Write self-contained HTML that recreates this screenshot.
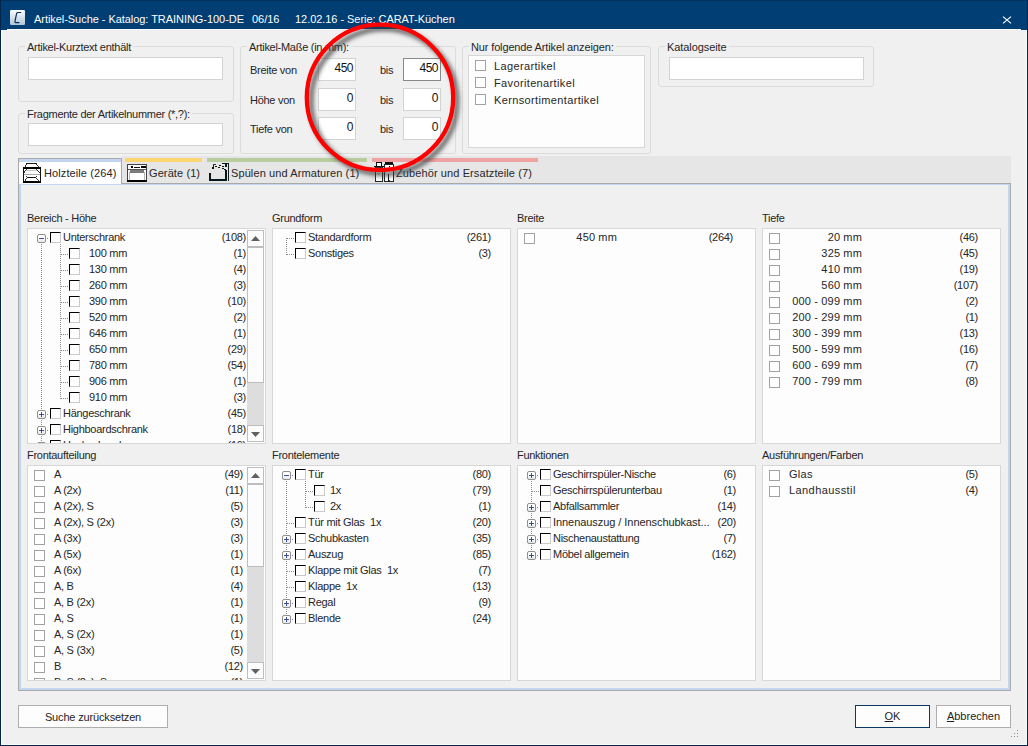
<!DOCTYPE html><html><head><meta charset="utf-8"><style>
*{box-sizing:border-box;margin:0;padding:0}
html,body{width:1028px;height:746px;overflow:hidden;background:#003E74}
body{position:relative;font-family:"Liberation Sans",sans-serif;font-size:11px;color:#1e1e1e}
.a{position:absolute;white-space:pre;line-height:13px}
.m{letter-spacing:-0.28px}
.t{letter-spacing:0.15px}
.tt{position:absolute;white-space:pre;color:#fff;font-size:11px;top:13px;line-height:12px;letter-spacing:-0.05px}
.gb{position:absolute;border:1px solid #DCDCDC;border-radius:3px}
.inp{position:absolute;background:#fff;border:1px solid #D3D3D3}
.lb{position:absolute;background:#FDFDFD;border:1px solid #D7D7D7;overflow:hidden}
.r{text-align:right}
.cb{position:absolute;width:11px;height:11px;background:#fff;border:1px solid #A2A2A2}
.cb3{position:absolute;width:11px;height:11px;background:#fff;border-top:1px solid #000;border-left:1px solid #000;border-right:1px solid #C9C9C9;border-bottom:1px solid #C9C9C9}
.ex{position:absolute;width:9px;height:9px;border:1px solid #8E8E8E;border-radius:2px;background:linear-gradient(#fff 0%,#fff 45%,#E6E6E6 100%)}
.ex:before{content:"";position:absolute;left:1px;top:3px;width:5px;height:1px;background:#3B4FA1}
.ex.p:after{content:"";position:absolute;left:3px;top:1px;width:1px;height:5px;background:#3B4FA1}
.btn{position:absolute;top:705px;height:23px;background:#FDFDFD;border:1px solid #ADADAD;text-align:center;line-height:21px;color:#1e1e1e}
.sb{position:absolute;width:17px;background:#DDDDDD}
.sbb{position:absolute;left:0;width:17px;height:17px;background:#FCFCFC;border:1px solid #BEBEBE}
.th{position:absolute;left:0;width:17px;background:#FCFCFC;border:1px solid #BEBEBE}
</style></head><body>
<div class="a" style="left:0;top:0;width:1028px;height:1px;background:#00305C"></div>
<svg class="a" style="left:10px;top:10px" width="15" height="15" viewBox="0 0 15 15"><defs><linearGradient id="ig" x1="0" y1="0" x2="0" y2="1"><stop offset="0" stop-color="#FBFDFE"/><stop offset="1" stop-color="#AFC6D9"/></linearGradient></defs><rect x="0" y="0" width="15" height="15" rx="1.2" fill="url(#ig)"/><path d="M11.2 2.5 H7.8 Q7 2.5 6.6 3.6 L5 11 Q4.7 12.7 6.3 12.7 H9.4" fill="none" stroke="#0A2A5A" stroke-width="1.2"/></svg>
<div class="tt" style="left:34px">Artikel-Suche - Katalog: TRAINING-100-DE</div>
<div class="tt" style="left:252px">06/16</div>
<div class="tt" style="left:295px">12.02.16 - Serie: CARAT-Küchen</div>
<svg class="a" style="left:1002px;top:15px" width="10" height="10" viewBox="0 0 10 10"><path d="M1 1.6L9 8.4M9 1.6L1 8.4" stroke="#fff" stroke-width="1.2"/></svg>
<div class="a" style="left:0;top:0;width:1px;height:746px;background:#03254C"></div>
<div class="a" style="left:1027px;top:0;width:1px;height:746px;background:#03254C"></div>
<div class="a" style="left:0;top:745px;width:1028px;height:1px;background:#03254C"></div>
<div class="a" style="left:1px;top:29px;width:1026px;height:716px;background:#F0F0F0;border:1px solid #FDFDFD"></div>
<div class="a" style="left:1px;top:29px;width:6px;height:1px;background:#003E74"></div>
<div class="a" style="left:1021px;top:29px;width:6px;height:1px;background:#003E74"></div>
<div class="gb" style="left:18px;top:46px;width:216px;height:56px"></div>
<div class="a m" style="left:25px;top:41px;background:#F0F0F0;padding:0 2px;color:#262626">Artikel-Kurztext enthält</div>
<div class="inp" style="left:28px;top:57px;width:195px;height:23px;"></div>
<div class="gb" style="left:18px;top:113px;width:216px;height:41px"></div>
<div class="a m" style="left:25px;top:108px;background:#F0F0F0;padding:0 2px;color:#262626">Fragmente der Artikelnummer (*,?):</div>
<div class="inp" style="left:28px;top:123px;width:195px;height:23px;"></div>
<div class="gb" style="left:240px;top:46px;width:216px;height:108px"></div>
<div class="a m" style="left:247px;top:41px;background:#F0F0F0;padding:0 2px;color:#262626">Artikel-Maße (in mm):</div>
<div class="a m" style="left:250px;top:64px;color:#262626">Breite von</div>
<div class="a m" style="left:380px;top:64px;color:#262626">bis</div>
<div class="inp" style="left:318px;top:58px;width:38px;height:23px;"></div>
<div class="inp" style="left:403px;top:58px;width:38px;height:23px;border-color:#898989"></div>
<div class="a r" style="left:318px;top:62px;width:35px;color:#111;font-size:12px;letter-spacing:-0.5px">450</div>
<div class="a r" style="left:403px;top:62px;width:35px;color:#111;font-size:12px;letter-spacing:-0.5px">450</div>
<div class="a m" style="left:250px;top:94px;color:#262626">Höhe von</div>
<div class="a m" style="left:380px;top:94px;color:#262626">bis</div>
<div class="inp" style="left:318px;top:88px;width:38px;height:23px;"></div>
<div class="inp" style="left:403px;top:88px;width:38px;height:23px;"></div>
<div class="a r" style="left:318px;top:92px;width:35px;color:#111;font-size:12px;letter-spacing:-0.5px">0</div>
<div class="a r" style="left:403px;top:92px;width:35px;color:#111;font-size:12px;letter-spacing:-0.5px">0</div>
<div class="a m" style="left:250px;top:123px;color:#262626">Tiefe von</div>
<div class="a m" style="left:380px;top:123px;color:#262626">bis</div>
<div class="inp" style="left:318px;top:117px;width:38px;height:23px;"></div>
<div class="inp" style="left:403px;top:117px;width:38px;height:23px;"></div>
<div class="a r" style="left:318px;top:121px;width:35px;color:#111;font-size:12px;letter-spacing:-0.5px">0</div>
<div class="a r" style="left:403px;top:121px;width:35px;color:#111;font-size:12px;letter-spacing:-0.5px">0</div>
<div class="gb" style="left:462px;top:46px;width:189px;height:108px"></div>
<div class="a m" style="left:469px;top:41px;background:#F0F0F0;padding:0 2px;color:#262626;letter-spacing:-0.14px">Nur folgende Artikel anzeigen:</div>
<div class="lb" style="left:468px;top:55px;width:177px;height:93px;"></div>
<div class="cb" style="left:475px;top:60px"></div>
<div class="a" style="left:494px;top:60px;color:#262626;letter-spacing:0.2px;letter-spacing:0.36px">Lagerartikel</div>
<div class="cb" style="left:475px;top:77px"></div>
<div class="a" style="left:494px;top:77px;color:#262626;letter-spacing:0.2px;letter-spacing:0.36px">Favoritenartikel</div>
<div class="cb" style="left:475px;top:94px"></div>
<div class="a" style="left:494px;top:94px;color:#262626;letter-spacing:0.2px;letter-spacing:0.36px">Kernsortimentartikel</div>
<div class="gb" style="left:658px;top:46px;width:216px;height:41px"></div>
<div class="a m" style="left:665px;top:41px;background:#F0F0F0;padding:0 2px;color:#262626;letter-spacing:-0.08px">Katalogseite</div>
<div class="inp" style="left:669px;top:57px;width:195px;height:23px;"></div>
<div class="a" style="left:122px;top:156px;width:889px;height:27px;background:#E6E6E6"></div>
<div class="a" style="left:122px;top:183px;width:889px;height:1px;background:#A9A9A9"></div>
<div class="a" style="left:18px;top:184px;width:993px;height:507px;border-left:1px solid #A9A9A9;border-right:1px solid #A9A9A9;border-bottom:1px solid #A9A9A9;background:#C4D5F2"></div>
<div class="a" style="left:21px;top:185px;width:987px;height:503px;background:#F0F0F0"></div>
<div class="a" style="left:18px;top:158px;width:104px;height:26px;background:#fff;border:1px solid #A9A9A9;border-bottom:none"></div>
<div class="a" style="left:19px;top:159px;width:102px;height:3px;background:#C4D5F2"></div>
<div class="a" style="left:19px;top:184px;width:2px;height:1px;background:#C4D5F2"></div>
<div class="a" style="left:125px;top:158px;width:77px;height:4px;background:#FDD672"></div>
<div class="a" style="left:207px;top:158px;width:160px;height:4px;background:#B9CC9E"></div>
<div class="a" style="left:372px;top:158px;width:166px;height:4px;background:#F0A3A3"></div>
<svg class="a" style="left:22px;top:162px" width="21" height="22" shape-rendering="crispEdges"><rect x="2" y="1" width="18" height="21" fill="#fff"/><rect x="4" y="1" width="11" height="1" fill="#1a1a1a"/><rect x="1" y="5" width="18" height="2" fill="#000"/><rect x="1" y="7" width="1" height="13" fill="#111"/><rect x="18" y="7" width="1" height="13" fill="#111"/><rect x="3" y="8" width="13" height="1" fill="#C8C8C8"/><rect x="2" y="12" width="16" height="1" fill="#A8A8A8"/><rect x="5" y="15" width="9" height="1" fill="#111"/><rect x="4" y="14" width="1" height="1" fill="#333"/><rect x="14" y="14" width="1" height="1" fill="#333"/><rect x="1" y="19" width="18" height="2" fill="#000"/><path d="M4.5 1.5 L1.5 5.5 M14.5 1.5 L18.5 5.5 M4.5 7 L1.5 11.5 M14.5 7 L18.5 11.5 M4.5 15.5 L1.5 19.5 M14.5 15.5 L18.5 19.5" stroke="#222" stroke-width="0.9" fill="none"/></svg>
<div class="a" style="left:44px;top:167px;color:#262626;letter-spacing:0.1px">Holzteile (264)</div>
<svg class="a" style="left:127px;top:164px" width="20" height="18" shape-rendering="crispEdges"><rect x="0" y="0" width="20" height="18" fill="#fff"/><rect x="0" y="0" width="20" height="1" fill="#444"/><rect x="0" y="0" width="1" height="17" fill="#444"/><rect x="19" y="0" width="1" height="17" fill="#444"/><rect x="4" y="2" width="2" height="2" fill="#000"/><rect x="7" y="3" width="6" height="1" fill="#111"/><rect x="14" y="2" width="5" height="2" fill="#000"/><rect x="1" y="5" width="18" height="1" fill="#555"/><rect x="3" y="6" width="14" height="3" fill="#7C7C7C"/><rect x="2" y="8" width="1" height="8" fill="#B5B5B5"/><rect x="17" y="8" width="1" height="8" fill="#B5B5B5"/><rect x="0" y="16" width="20" height="2" fill="#000"/></svg>
<div class="a" style="left:149px;top:167px;color:#262626;letter-spacing:0.1px">Geräte (1)</div>
<svg class="a" style="left:209px;top:163px" width="21" height="19" shape-rendering="crispEdges"><rect x="0" y="10" width="2" height="8" fill="#061818"/><rect x="0" y="16" width="18" height="2" fill="#061818"/><rect x="16" y="7" width="2" height="11" fill="#061818"/><rect x="19" y="0" width="1" height="18" fill="#0A2020"/><rect x="13" y="0" width="7" height="1" fill="#0A1A1A"/><rect x="16" y="0" width="2" height="4" fill="#0A1A1A"/><rect x="4" y="1" width="3" height="1" fill="#1E3A3A"/><rect x="6" y="3" width="2" height="1" fill="#111"/><rect x="10" y="2" width="2" height="1" fill="#111"/><rect x="13" y="3" width="2" height="1" fill="#111"/><rect x="9" y="4" width="2" height="1" fill="#111"/><rect x="13" y="5" width="2" height="1" fill="#111"/><rect x="15" y="6" width="2" height="1" fill="#111"/><rect x="3" y="4" width="2" height="2" fill="#111"/><rect x="4" y="2" width="1" height="2" fill="#222"/></svg>
<div class="a" style="left:231px;top:167px;color:#262626;letter-spacing:0.1px">Spülen und Armaturen (1)</div>
<svg class="a" style="left:374px;top:162px" width="20" height="20" shape-rendering="crispEdges"><rect x="3" y="1" width="4" height="4" fill="#fff"/><rect x="2" y="0" width="6" height="1" fill="#111"/><rect x="2" y="0" width="1" height="5" fill="#111"/><rect x="7" y="0" width="1" height="5" fill="#111"/><rect x="0" y="4" width="10" height="1" fill="#111"/><rect x="1" y="5" width="8" height="1" fill="#333"/><rect x="2" y="6" width="6" height="13" fill="#fff"/><rect x="1" y="5" width="1" height="15" fill="#1a2a2a"/><rect x="8" y="5" width="1" height="15" fill="#1a2a2a"/><rect x="1" y="19" width="8" height="1" fill="#222"/><rect x="3" y="11" width="1" height="1" fill="#AAA"/><rect x="4" y="12" width="1" height="1" fill="#AAA"/><rect x="5" y="11" width="1" height="1" fill="#AAA"/><rect x="11" y="3" width="8" height="16" fill="#fff"/><rect x="11" y="0" width="8" height="2" fill="#111"/><rect x="10" y="2" width="10" height="1" fill="#222"/><rect x="10" y="2" width="1" height="18" fill="#1a2a2a"/><rect x="19" y="2" width="1" height="18" fill="#1a2a2a"/><rect x="10" y="19" width="10" height="1" fill="#222"/><rect x="15" y="4" width="1" height="1" fill="#000"/><rect x="14" y="12" width="1" height="7" fill="#111"/><rect x="15" y="18" width="1" height="1" fill="#444"/></svg>
<div class="a" style="left:396px;top:167px;color:#262626;letter-spacing:0.1px">Zubehör und Ersatzteile (7)</div>
<div class="a m" style="left:27px;top:212px;color:#262626">Bereich - Höhe</div>
<div class="lb" style="left:27px;top:228px;width:239px;height:216px"></div>
<div class="a" style="left:28px;top:229px;width:237px;height:214px;overflow:hidden">
<svg class="a" style="left:13px;top:15px" width="1" height="235"><line x1="0.5" y1="0" x2="0.5" y2="235" stroke="#8C8C8C" stroke-width="1" stroke-dasharray="1 1"/></svg>
<div class="ex" style="left:9px;top:5px"></div>
<svg class="a" style="left:19px;top:9px" width="1" height="1"><line x1="0" y1="0.5" x2="1" y2="0.5" stroke="#8C8C8C" stroke-width="1" stroke-dasharray="1 1"/></svg>
<div class="cb3" style="left:22px;top:3px"></div>
<div class="a m" style="left:35px;top:2px;color:#262626">Unterschrank</div>
<div class="a r m" style="left:122px;top:2px;width:96px;color:#262626">(108)</div>
<svg class="a" style="left:33px;top:25px" width="7" height="1"><line x1="0" y1="0.5" x2="7" y2="0.5" stroke="#8C8C8C" stroke-width="1" stroke-dasharray="1 1"/></svg>
<div class="cb3" style="left:41px;top:19px"></div>
<div class="a m" style="left:61px;top:18px;color:#262626">100 mm</div>
<div class="a r m" style="left:122px;top:18px;width:96px;color:#262626">(1)</div>
<svg class="a" style="left:33px;top:41px" width="7" height="1"><line x1="0" y1="0.5" x2="7" y2="0.5" stroke="#8C8C8C" stroke-width="1" stroke-dasharray="1 1"/></svg>
<div class="cb3" style="left:41px;top:35px"></div>
<div class="a m" style="left:61px;top:34px;color:#262626">130 mm</div>
<div class="a r m" style="left:122px;top:34px;width:96px;color:#262626">(4)</div>
<svg class="a" style="left:33px;top:57px" width="7" height="1"><line x1="0" y1="0.5" x2="7" y2="0.5" stroke="#8C8C8C" stroke-width="1" stroke-dasharray="1 1"/></svg>
<div class="cb3" style="left:41px;top:51px"></div>
<div class="a m" style="left:61px;top:50px;color:#262626">260 mm</div>
<div class="a r m" style="left:122px;top:50px;width:96px;color:#262626">(3)</div>
<svg class="a" style="left:33px;top:73px" width="7" height="1"><line x1="0" y1="0.5" x2="7" y2="0.5" stroke="#8C8C8C" stroke-width="1" stroke-dasharray="1 1"/></svg>
<div class="cb3" style="left:41px;top:67px"></div>
<div class="a m" style="left:61px;top:66px;color:#262626">390 mm</div>
<div class="a r m" style="left:122px;top:66px;width:96px;color:#262626">(10)</div>
<svg class="a" style="left:33px;top:89px" width="7" height="1"><line x1="0" y1="0.5" x2="7" y2="0.5" stroke="#8C8C8C" stroke-width="1" stroke-dasharray="1 1"/></svg>
<div class="cb3" style="left:41px;top:83px"></div>
<div class="a m" style="left:61px;top:82px;color:#262626">520 mm</div>
<div class="a r m" style="left:122px;top:82px;width:96px;color:#262626">(2)</div>
<svg class="a" style="left:33px;top:105px" width="7" height="1"><line x1="0" y1="0.5" x2="7" y2="0.5" stroke="#8C8C8C" stroke-width="1" stroke-dasharray="1 1"/></svg>
<div class="cb3" style="left:41px;top:99px"></div>
<div class="a m" style="left:61px;top:98px;color:#262626">646 mm</div>
<div class="a r m" style="left:122px;top:98px;width:96px;color:#262626">(1)</div>
<svg class="a" style="left:33px;top:121px" width="7" height="1"><line x1="0" y1="0.5" x2="7" y2="0.5" stroke="#8C8C8C" stroke-width="1" stroke-dasharray="1 1"/></svg>
<div class="cb3" style="left:41px;top:115px"></div>
<div class="a m" style="left:61px;top:114px;color:#262626">650 mm</div>
<div class="a r m" style="left:122px;top:114px;width:96px;color:#262626">(29)</div>
<svg class="a" style="left:33px;top:137px" width="7" height="1"><line x1="0" y1="0.5" x2="7" y2="0.5" stroke="#8C8C8C" stroke-width="1" stroke-dasharray="1 1"/></svg>
<div class="cb3" style="left:41px;top:131px"></div>
<div class="a m" style="left:61px;top:130px;color:#262626">780 mm</div>
<div class="a r m" style="left:122px;top:130px;width:96px;color:#262626">(54)</div>
<svg class="a" style="left:33px;top:153px" width="7" height="1"><line x1="0" y1="0.5" x2="7" y2="0.5" stroke="#8C8C8C" stroke-width="1" stroke-dasharray="1 1"/></svg>
<div class="cb3" style="left:41px;top:147px"></div>
<div class="a m" style="left:61px;top:146px;color:#262626">906 mm</div>
<div class="a r m" style="left:122px;top:146px;width:96px;color:#262626">(1)</div>
<svg class="a" style="left:33px;top:169px" width="7" height="1"><line x1="0" y1="0.5" x2="7" y2="0.5" stroke="#8C8C8C" stroke-width="1" stroke-dasharray="1 1"/></svg>
<div class="cb3" style="left:41px;top:163px"></div>
<div class="a m" style="left:61px;top:162px;color:#262626">910 mm</div>
<div class="a r m" style="left:122px;top:162px;width:96px;color:#262626">(3)</div>
<div class="ex p" style="left:9px;top:181px"></div>
<svg class="a" style="left:19px;top:185px" width="1" height="1"><line x1="0" y1="0.5" x2="1" y2="0.5" stroke="#8C8C8C" stroke-width="1" stroke-dasharray="1 1"/></svg>
<div class="cb3" style="left:22px;top:179px"></div>
<div class="a m" style="left:35px;top:178px;color:#262626">Hängeschrank</div>
<div class="a r m" style="left:122px;top:178px;width:96px;color:#262626">(45)</div>
<div class="ex p" style="left:9px;top:197px"></div>
<svg class="a" style="left:19px;top:201px" width="1" height="1"><line x1="0" y1="0.5" x2="1" y2="0.5" stroke="#8C8C8C" stroke-width="1" stroke-dasharray="1 1"/></svg>
<div class="cb3" style="left:22px;top:195px"></div>
<div class="a m" style="left:35px;top:194px;color:#262626">Highboardschrank</div>
<div class="a r m" style="left:122px;top:194px;width:96px;color:#262626">(18)</div>
<div class="ex p" style="left:9px;top:213px"></div>
<svg class="a" style="left:19px;top:217px" width="1" height="1"><line x1="0" y1="0.5" x2="1" y2="0.5" stroke="#8C8C8C" stroke-width="1" stroke-dasharray="1 1"/></svg>
<div class="cb3" style="left:22px;top:211px"></div>
<div class="a m" style="left:35px;top:210px;color:#262626">Hochschrank</div>
<div class="a r m" style="left:122px;top:210px;width:96px;color:#262626">(19)</div>
<svg class="a" style="left:32px;top:15px" width="1" height="155"><line x1="0.5" y1="0" x2="0.5" y2="155" stroke="#8C8C8C" stroke-width="1" stroke-dasharray="1 1"/></svg>
</div>
<div class="sb" style="left:247px;top:230px;height:212px"></div>
<div class="sbb" style="left:247px;top:230px"></div>
<svg class="a" style="left:251px;top:236px" width="9" height="5"><path d="M0 5 L4.5 0 L9 5Z" fill="#606060"/></svg>
<div class="th" style="left:247px;top:247px;height:136px"></div>
<div class="sbb" style="left:247px;top:425px"></div>
<svg class="a" style="left:251px;top:432px" width="9" height="5"><path d="M0 0 L9 0 L4.5 5Z" fill="#606060"/></svg>
<div class="a m" style="left:272px;top:212px;color:#262626">Grundform</div>
<div class="lb" style="left:272px;top:228px;width:239px;height:216px"></div>
<div class="a" style="left:273px;top:229px;width:237px;height:214px;overflow:hidden">
<svg class="a" style="left:13px;top:9px" width="1" height="17"><line x1="0.5" y1="0" x2="0.5" y2="17" stroke="#8C8C8C" stroke-width="1" stroke-dasharray="1 1"/></svg>
<svg class="a" style="left:14px;top:9px" width="7" height="1"><line x1="0" y1="0.5" x2="7" y2="0.5" stroke="#8C8C8C" stroke-width="1" stroke-dasharray="1 1"/></svg>
<div class="cb3" style="left:22px;top:3px"></div>
<div class="a m" style="left:35px;top:2px;color:#262626">Standardform</div>
<div class="a r m" style="left:122px;top:2px;width:96px;color:#262626">(261)</div>
<svg class="a" style="left:14px;top:25px" width="7" height="1"><line x1="0" y1="0.5" x2="7" y2="0.5" stroke="#8C8C8C" stroke-width="1" stroke-dasharray="1 1"/></svg>
<div class="cb3" style="left:22px;top:19px"></div>
<div class="a m" style="left:35px;top:18px;color:#262626">Sonstiges</div>
<div class="a r m" style="left:122px;top:18px;width:96px;color:#262626">(3)</div>
</div>
<div class="a m" style="left:517px;top:212px;color:#262626">Breite</div>
<div class="lb" style="left:517px;top:228px;width:239px;height:216px"></div>
<div class="a" style="left:518px;top:229px;width:237px;height:214px;overflow:hidden">
<div class="cb" style="left:6px;top:4px"></div>
<div class="a t r" style="left:20px;top:2px;width:79px;color:#262626">450 mm</div>
<div class="a m r" style="left:149px;top:2px;width:66px;color:#262626">(264)</div>
</div>
<div class="a m" style="left:762px;top:212px;color:#262626">Tiefe</div>
<div class="lb" style="left:762px;top:228px;width:239px;height:216px"></div>
<div class="a" style="left:763px;top:229px;width:237px;height:214px;overflow:hidden">
<div class="cb" style="left:6px;top:4px"></div>
<div class="a t r" style="left:20px;top:2px;width:79px;color:#262626">20 mm</div>
<div class="a m r" style="left:149px;top:2px;width:66px;color:#262626">(46)</div>
<div class="cb" style="left:6px;top:20px"></div>
<div class="a t r" style="left:20px;top:18px;width:79px;color:#262626">325 mm</div>
<div class="a m r" style="left:149px;top:18px;width:66px;color:#262626">(45)</div>
<div class="cb" style="left:6px;top:36px"></div>
<div class="a t r" style="left:20px;top:34px;width:79px;color:#262626">410 mm</div>
<div class="a m r" style="left:149px;top:34px;width:66px;color:#262626">(19)</div>
<div class="cb" style="left:6px;top:52px"></div>
<div class="a t r" style="left:20px;top:50px;width:79px;color:#262626">560 mm</div>
<div class="a m r" style="left:149px;top:50px;width:66px;color:#262626">(107)</div>
<div class="cb" style="left:6px;top:68px"></div>
<div class="a t r" style="left:20px;top:66px;width:79px;color:#262626">000 - 099 mm</div>
<div class="a m r" style="left:149px;top:66px;width:66px;color:#262626">(2)</div>
<div class="cb" style="left:6px;top:84px"></div>
<div class="a t r" style="left:20px;top:82px;width:79px;color:#262626">200 - 299 mm</div>
<div class="a m r" style="left:149px;top:82px;width:66px;color:#262626">(1)</div>
<div class="cb" style="left:6px;top:100px"></div>
<div class="a t r" style="left:20px;top:98px;width:79px;color:#262626">300 - 399 mm</div>
<div class="a m r" style="left:149px;top:98px;width:66px;color:#262626">(13)</div>
<div class="cb" style="left:6px;top:116px"></div>
<div class="a t r" style="left:20px;top:114px;width:79px;color:#262626">500 - 599 mm</div>
<div class="a m r" style="left:149px;top:114px;width:66px;color:#262626">(16)</div>
<div class="cb" style="left:6px;top:132px"></div>
<div class="a t r" style="left:20px;top:130px;width:79px;color:#262626">600 - 699 mm</div>
<div class="a m r" style="left:149px;top:130px;width:66px;color:#262626">(7)</div>
<div class="cb" style="left:6px;top:148px"></div>
<div class="a t r" style="left:20px;top:146px;width:79px;color:#262626">700 - 799 mm</div>
<div class="a m r" style="left:149px;top:146px;width:66px;color:#262626">(8)</div>
</div>
<div class="a m" style="left:27px;top:449px;color:#262626">Frontaufteilung</div>
<div class="lb" style="left:27px;top:465px;width:239px;height:216px"></div>
<div class="a" style="left:28px;top:466px;width:237px;height:214px;overflow:hidden">
<div class="cb" style="left:6px;top:4px"></div>
<div class="a m" style="left:26px;top:2px;color:#262626">A</div>
<div class="a m r" style="left:149px;top:2px;width:66px;color:#262626">(49)</div>
<div class="cb" style="left:6px;top:20px"></div>
<div class="a m" style="left:26px;top:18px;color:#262626">A (2x)</div>
<div class="a m r" style="left:149px;top:18px;width:66px;color:#262626">(11)</div>
<div class="cb" style="left:6px;top:36px"></div>
<div class="a m" style="left:26px;top:34px;color:#262626">A (2x), S</div>
<div class="a m r" style="left:149px;top:34px;width:66px;color:#262626">(5)</div>
<div class="cb" style="left:6px;top:52px"></div>
<div class="a m" style="left:26px;top:50px;color:#262626">A (2x), S (2x)</div>
<div class="a m r" style="left:149px;top:50px;width:66px;color:#262626">(3)</div>
<div class="cb" style="left:6px;top:68px"></div>
<div class="a m" style="left:26px;top:66px;color:#262626">A (3x)</div>
<div class="a m r" style="left:149px;top:66px;width:66px;color:#262626">(3)</div>
<div class="cb" style="left:6px;top:84px"></div>
<div class="a m" style="left:26px;top:82px;color:#262626">A (5x)</div>
<div class="a m r" style="left:149px;top:82px;width:66px;color:#262626">(1)</div>
<div class="cb" style="left:6px;top:100px"></div>
<div class="a m" style="left:26px;top:98px;color:#262626">A (6x)</div>
<div class="a m r" style="left:149px;top:98px;width:66px;color:#262626">(1)</div>
<div class="cb" style="left:6px;top:116px"></div>
<div class="a m" style="left:26px;top:114px;color:#262626">A, B</div>
<div class="a m r" style="left:149px;top:114px;width:66px;color:#262626">(4)</div>
<div class="cb" style="left:6px;top:132px"></div>
<div class="a m" style="left:26px;top:130px;color:#262626">A, B (2x)</div>
<div class="a m r" style="left:149px;top:130px;width:66px;color:#262626">(1)</div>
<div class="cb" style="left:6px;top:148px"></div>
<div class="a m" style="left:26px;top:146px;color:#262626">A, S</div>
<div class="a m r" style="left:149px;top:146px;width:66px;color:#262626">(1)</div>
<div class="cb" style="left:6px;top:164px"></div>
<div class="a m" style="left:26px;top:162px;color:#262626">A, S (2x)</div>
<div class="a m r" style="left:149px;top:162px;width:66px;color:#262626">(1)</div>
<div class="cb" style="left:6px;top:180px"></div>
<div class="a m" style="left:26px;top:178px;color:#262626">A, S (3x)</div>
<div class="a m r" style="left:149px;top:178px;width:66px;color:#262626">(5)</div>
<div class="cb" style="left:6px;top:196px"></div>
<div class="a m" style="left:26px;top:194px;color:#262626">B</div>
<div class="a m r" style="left:149px;top:194px;width:66px;color:#262626">(12)</div>
<div class="cb" style="left:6px;top:212px"></div>
<div class="a m" style="left:26px;top:210px;color:#262626">B, S (2x), S</div>
<div class="a m r" style="left:149px;top:210px;width:66px;color:#262626">(1)</div>
</div>
<div class="sb" style="left:247px;top:467px;height:212px"></div>
<div class="sbb" style="left:247px;top:467px"></div>
<svg class="a" style="left:251px;top:473px" width="9" height="5"><path d="M0 5 L4.5 0 L9 5Z" fill="#606060"/></svg>
<div class="th" style="left:247px;top:484px;height:83px"></div>
<div class="sbb" style="left:247px;top:662px"></div>
<svg class="a" style="left:251px;top:669px" width="9" height="5"><path d="M0 0 L9 0 L4.5 5Z" fill="#606060"/></svg>
<div class="a m" style="left:272px;top:449px;color:#262626">Frontelemente</div>
<div class="lb" style="left:272px;top:465px;width:239px;height:216px"></div>
<div class="a" style="left:273px;top:466px;width:237px;height:214px;overflow:hidden">
<svg class="a" style="left:13px;top:15px" width="1" height="139"><line x1="0.5" y1="0" x2="0.5" y2="139" stroke="#8C8C8C" stroke-width="1" stroke-dasharray="1 1"/></svg>
<div class="ex" style="left:9px;top:5px"></div>
<svg class="a" style="left:19px;top:9px" width="1" height="1"><line x1="0" y1="0.5" x2="1" y2="0.5" stroke="#8C8C8C" stroke-width="1" stroke-dasharray="1 1"/></svg>
<div class="cb3" style="left:22px;top:3px"></div>
<div class="a m" style="left:35px;top:2px;color:#262626">Tür</div>
<div class="a r m" style="left:122px;top:2px;width:96px;color:#262626">(80)</div>
<svg class="a" style="left:33px;top:25px" width="7" height="1"><line x1="0" y1="0.5" x2="7" y2="0.5" stroke="#8C8C8C" stroke-width="1" stroke-dasharray="1 1"/></svg>
<div class="cb3" style="left:41px;top:19px"></div>
<div class="a m" style="left:57px;top:18px;color:#262626">1x</div>
<div class="a r m" style="left:122px;top:18px;width:96px;color:#262626">(79)</div>
<svg class="a" style="left:33px;top:41px" width="7" height="1"><line x1="0" y1="0.5" x2="7" y2="0.5" stroke="#8C8C8C" stroke-width="1" stroke-dasharray="1 1"/></svg>
<div class="cb3" style="left:41px;top:35px"></div>
<div class="a m" style="left:57px;top:34px;color:#262626">2x</div>
<div class="a r m" style="left:122px;top:34px;width:96px;color:#262626">(1)</div>
<svg class="a" style="left:14px;top:57px" width="7" height="1"><line x1="0" y1="0.5" x2="7" y2="0.5" stroke="#8C8C8C" stroke-width="1" stroke-dasharray="1 1"/></svg>
<div class="cb3" style="left:22px;top:51px"></div>
<div class="a m" style="left:35px;top:50px;color:#262626">Tür mit Glas  1x</div>
<div class="a r m" style="left:122px;top:50px;width:96px;color:#262626">(20)</div>
<div class="ex p" style="left:9px;top:69px"></div>
<svg class="a" style="left:19px;top:73px" width="1" height="1"><line x1="0" y1="0.5" x2="1" y2="0.5" stroke="#8C8C8C" stroke-width="1" stroke-dasharray="1 1"/></svg>
<div class="cb3" style="left:22px;top:67px"></div>
<div class="a m" style="left:35px;top:66px;color:#262626">Schubkasten</div>
<div class="a r m" style="left:122px;top:66px;width:96px;color:#262626">(35)</div>
<div class="ex p" style="left:9px;top:85px"></div>
<svg class="a" style="left:19px;top:89px" width="1" height="1"><line x1="0" y1="0.5" x2="1" y2="0.5" stroke="#8C8C8C" stroke-width="1" stroke-dasharray="1 1"/></svg>
<div class="cb3" style="left:22px;top:83px"></div>
<div class="a m" style="left:35px;top:82px;color:#262626">Auszug</div>
<div class="a r m" style="left:122px;top:82px;width:96px;color:#262626">(85)</div>
<svg class="a" style="left:14px;top:105px" width="7" height="1"><line x1="0" y1="0.5" x2="7" y2="0.5" stroke="#8C8C8C" stroke-width="1" stroke-dasharray="1 1"/></svg>
<div class="cb3" style="left:22px;top:99px"></div>
<div class="a m" style="left:35px;top:98px;color:#262626">Klappe mit Glas  1x</div>
<div class="a r m" style="left:122px;top:98px;width:96px;color:#262626">(7)</div>
<svg class="a" style="left:14px;top:121px" width="7" height="1"><line x1="0" y1="0.5" x2="7" y2="0.5" stroke="#8C8C8C" stroke-width="1" stroke-dasharray="1 1"/></svg>
<div class="cb3" style="left:22px;top:115px"></div>
<div class="a m" style="left:35px;top:114px;color:#262626">Klappe  1x</div>
<div class="a r m" style="left:122px;top:114px;width:96px;color:#262626">(13)</div>
<div class="ex p" style="left:9px;top:133px"></div>
<svg class="a" style="left:19px;top:137px" width="1" height="1"><line x1="0" y1="0.5" x2="1" y2="0.5" stroke="#8C8C8C" stroke-width="1" stroke-dasharray="1 1"/></svg>
<div class="cb3" style="left:22px;top:131px"></div>
<div class="a m" style="left:35px;top:130px;color:#262626">Regal</div>
<div class="a r m" style="left:122px;top:130px;width:96px;color:#262626">(9)</div>
<div class="ex p" style="left:9px;top:149px"></div>
<svg class="a" style="left:19px;top:153px" width="1" height="1"><line x1="0" y1="0.5" x2="1" y2="0.5" stroke="#8C8C8C" stroke-width="1" stroke-dasharray="1 1"/></svg>
<div class="cb3" style="left:22px;top:147px"></div>
<div class="a m" style="left:35px;top:146px;color:#262626">Blende</div>
<div class="a r m" style="left:122px;top:146px;width:96px;color:#262626">(24)</div>
<svg class="a" style="left:32px;top:15px" width="1" height="27"><line x1="0.5" y1="0" x2="0.5" y2="27" stroke="#8C8C8C" stroke-width="1" stroke-dasharray="1 1"/></svg>
</div>
<div class="a m" style="left:517px;top:449px;color:#262626">Funktionen</div>
<div class="lb" style="left:517px;top:465px;width:239px;height:216px"></div>
<div class="a" style="left:518px;top:466px;width:237px;height:214px;overflow:hidden">
<svg class="a" style="left:13px;top:15px" width="1" height="75"><line x1="0.5" y1="0" x2="0.5" y2="75" stroke="#8C8C8C" stroke-width="1" stroke-dasharray="1 1"/></svg>
<div class="ex p" style="left:9px;top:5px"></div>
<svg class="a" style="left:19px;top:9px" width="1" height="1"><line x1="0" y1="0.5" x2="1" y2="0.5" stroke="#8C8C8C" stroke-width="1" stroke-dasharray="1 1"/></svg>
<div class="cb3" style="left:22px;top:3px"></div>
<div class="a m" style="left:35px;top:2px;color:#262626">Geschirrspüler-Nische</div>
<div class="a r m" style="left:122px;top:2px;width:96px;color:#262626">(6)</div>
<svg class="a" style="left:14px;top:25px" width="7" height="1"><line x1="0" y1="0.5" x2="7" y2="0.5" stroke="#8C8C8C" stroke-width="1" stroke-dasharray="1 1"/></svg>
<div class="cb3" style="left:22px;top:19px"></div>
<div class="a m" style="left:35px;top:18px;color:#262626">Geschirrspülerunterbau</div>
<div class="a r m" style="left:122px;top:18px;width:96px;color:#262626">(1)</div>
<div class="ex p" style="left:9px;top:37px"></div>
<svg class="a" style="left:19px;top:41px" width="1" height="1"><line x1="0" y1="0.5" x2="1" y2="0.5" stroke="#8C8C8C" stroke-width="1" stroke-dasharray="1 1"/></svg>
<div class="cb3" style="left:22px;top:35px"></div>
<div class="a m" style="left:35px;top:34px;color:#262626">Abfallsammler</div>
<div class="a r m" style="left:122px;top:34px;width:96px;color:#262626">(14)</div>
<div class="ex p" style="left:9px;top:53px"></div>
<svg class="a" style="left:19px;top:57px" width="1" height="1"><line x1="0" y1="0.5" x2="1" y2="0.5" stroke="#8C8C8C" stroke-width="1" stroke-dasharray="1 1"/></svg>
<div class="cb3" style="left:22px;top:51px"></div>
<div class="a m" style="left:35px;top:50px;color:#262626;letter-spacing:-0.06px">Innenauszug / Innenschubkast...</div>
<div class="a r m" style="left:122px;top:50px;width:96px;color:#262626">(20)</div>
<div class="ex p" style="left:9px;top:69px"></div>
<svg class="a" style="left:19px;top:73px" width="1" height="1"><line x1="0" y1="0.5" x2="1" y2="0.5" stroke="#8C8C8C" stroke-width="1" stroke-dasharray="1 1"/></svg>
<div class="cb3" style="left:22px;top:67px"></div>
<div class="a m" style="left:35px;top:66px;color:#262626">Nischenaustattung</div>
<div class="a r m" style="left:122px;top:66px;width:96px;color:#262626">(7)</div>
<div class="ex p" style="left:9px;top:85px"></div>
<svg class="a" style="left:19px;top:89px" width="1" height="1"><line x1="0" y1="0.5" x2="1" y2="0.5" stroke="#8C8C8C" stroke-width="1" stroke-dasharray="1 1"/></svg>
<div class="cb3" style="left:22px;top:83px"></div>
<div class="a m" style="left:35px;top:82px;color:#262626">Möbel allgemein</div>
<div class="a r m" style="left:122px;top:82px;width:96px;color:#262626">(162)</div>
</div>
<div class="a m" style="left:762px;top:449px;color:#262626">Ausführungen/Farben</div>
<div class="lb" style="left:762px;top:465px;width:239px;height:216px"></div>
<div class="a" style="left:763px;top:466px;width:237px;height:214px;overflow:hidden">
<div class="cb" style="left:6px;top:4px"></div>
<div class="a t" style="left:26px;top:2px;color:#262626;letter-spacing:0.3px">Glas</div>
<div class="a m r" style="left:149px;top:2px;width:66px;color:#262626">(5)</div>
<div class="cb" style="left:6px;top:20px"></div>
<div class="a t" style="left:26px;top:18px;color:#262626;letter-spacing:0.42px">Landhausstil</div>
<div class="a m r" style="left:149px;top:18px;width:66px;color:#262626">(4)</div>
</div>
<div class="btn" style="left:18px;width:150px;letter-spacing:-0.16px;line-height:22px">Suche zurücksetzen</div>
<div class="btn" style="left:855px;width:75px;border:1px solid #0B3764;line-height:21px"><span style="text-decoration:underline">O</span>K</div>
<div class="btn" style="left:936px;width:75px"><span style="text-decoration:underline">A</span>bbrechen</div>
<svg class="a" style="left:1010px;top:729px" width="10" height="10"><rect x="7" y="1" width="1" height="1" fill="#8C8C8C"/><rect x="4" y="4" width="1" height="1" fill="#8C8C8C"/><rect x="7" y="4" width="1" height="1" fill="#8C8C8C"/><rect x="1" y="7" width="1" height="1" fill="#8C8C8C"/><rect x="4" y="7" width="1" height="1" fill="#8C8C8C"/><rect x="7" y="7" width="1" height="1" fill="#8C8C8C"/></svg>
<svg class="a" style="left:0;top:0" width="1028" height="746" viewBox="0 0 1028 746">
<defs><filter id="sh" x="-20%" y="-20%" width="140%" height="140%"><feGaussianBlur stdDeviation="2"/></filter></defs>
<ellipse cx="384" cy="101.4" rx="73" ry="72.5" fill="none" stroke="#3C3C3C" stroke-opacity="0.8" stroke-width="4.5" filter="url(#sh)"/>
<ellipse cx="380" cy="97.4" rx="73.2" ry="72.7" fill="none" stroke="#FF0000" stroke-width="4.3"/>
</svg>
</body></html>
